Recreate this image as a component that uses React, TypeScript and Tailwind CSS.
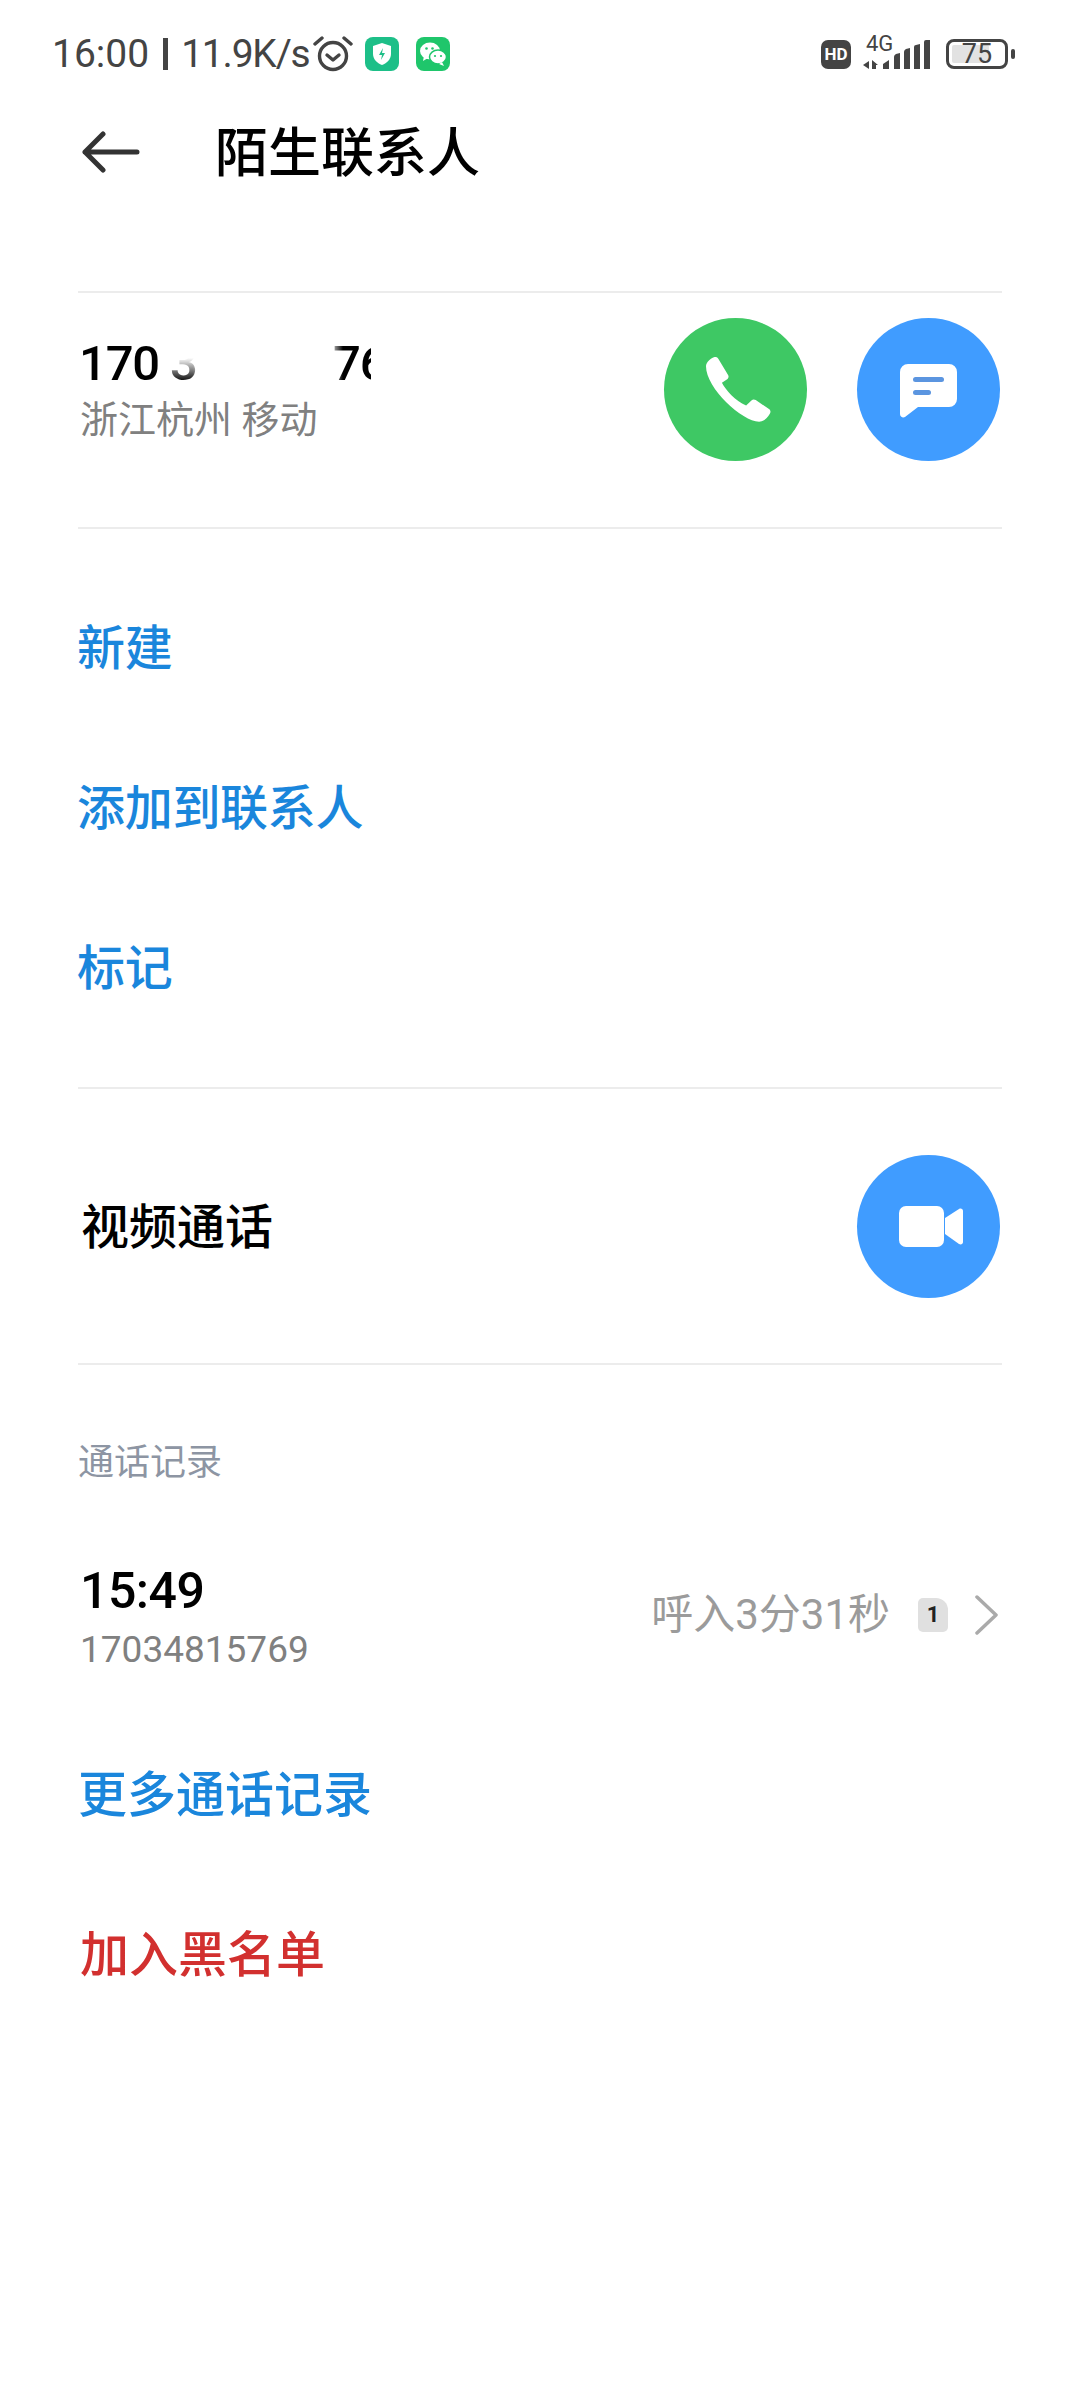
const cjk = "font-['Roboto','Noto_Sans_CJK_SC',sans-serif]";

const CircleButton = ({ color, children }: { color: string; children: React.ReactNode }) => (
  <div className={`w-[143px] h-[143px] rounded-full flex items-center justify-center ${color}`}>
    {children}
  </div>
);

const MenuRow = ({ label, className = "text-[48px] text-[#1a86dc] -ml-px tracking-[-0.3px]" }: { label: string; className?: string }) => (
  <div className={`h-[160px] flex items-center font-medium leading-none ${className}`}>{label}</div>
);

const Alarm = () => (
  <svg width="40" height="38" viewBox="0 0 40 38" fill="none" stroke="#444" strokeWidth="3.4" strokeLinecap="round" strokeLinejoin="round">
    <circle cx="20" cy="21" r="13.5" />
    <path d="M14 20l6 5 6-5" />
    <path d="M2 9l7-6M38 9l-7-6" />
  </svg>
);

const ShieldTile = () => (
  <div className="w-[34px] h-[34px] rounded-[8px] bg-[#1dbf88] flex items-center justify-center">
    <svg width="22" height="24" viewBox="0 0 22 24">
      <path d="M11 1l9 3v8c0 5-4 9-9 11-5-2-9-6-9-11V4z" fill="#fff" />
      <path d="M12 6l-4 7h3l-1 5 4-7h-3z" fill="#1dbf88" />
    </svg>
  </div>
);

const WechatTile = () => (
  <div className="w-[34px] h-[34px] rounded-[8px] bg-[#1fc66b] flex items-center justify-center">
    <svg width="28" height="26" viewBox="0 0 28 26">
      <ellipse cx="11" cy="10" rx="10" ry="8.5" fill="#fff" />
      <path d="M5 15l-1 5 5-3z" fill="#fff" />
      <ellipse cx="19" cy="16" rx="8.5" ry="7" fill="#fff" stroke="#1fc66b" strokeWidth="1.5" />
      <path d="M23 21l2 4-5-2z" fill="#fff" />
      <circle cx="7.5" cy="7.5" r="1.3" fill="#1fc66b" />
      <circle cx="13.5" cy="7.5" r="1.3" fill="#1fc66b" />
      <circle cx="16" cy="15" r="1.1" fill="#1fc66b" />
      <circle cx="22" cy="15" r="1.1" fill="#1fc66b" />
    </svg>
  </div>
);

const Signal = () => (
  <svg width="68" height="30" viewBox="0 0 68 30" fill="#444">
    <path d="M0 25l6-4v8zM9 20l6 5-2 0v4H9z" />
    <path d="M20 29v-5l6-4v9zM31 29V17q0-2 2-3l4-1v16zM41 29V12q0-2 2-3l4-1v21zM51 29V7q0-2 2-2l4-1v25zM61 29V2q0-2 2-2l4 0v29z" />
  </svg>
);

const Battery = () => (
  <div className="flex items-center gap-[3px]">
    <div className="relative w-[62px] h-[30px] rounded-[8px] border-[3px] border-[#444] flex items-center justify-center">
      <div className="absolute left-[3px] top-[3px] bottom-[3px] w-[37px] bg-[#e2e2e2] rounded-[2px]" />
      <span className="relative text-[27px] leading-none text-[#444]">75</span>
    </div>
    <div className="w-[4px] h-[10px] rounded-[2px] bg-[#444]" />
  </div>
);

const App = () => {
  return (
    <div className={`w-[1080px] h-[2400px] bg-white overflow-hidden ${cjk}`}>
      {/* status bar */}
      <div className="h-[108px] pl-[52px] pr-[65px] flex items-center text-[#444]">
        <span className="text-[39px] leading-none whitespace-nowrap">16:00</span>
        <div className="ml-[14px] w-[5px] h-[32px] bg-[#444]" />
        <span className="ml-[13px] text-[39px] leading-none whitespace-nowrap tracking-[-1.2px]">11.9K/s</span>
        <div className="ml-[4px]"><Alarm /></div>
        <div className="ml-[12px]"><ShieldTile /></div>
        <div className="ml-[17px]"><WechatTile /></div>
        <div className="ml-auto flex items-center">
          <div className="w-[30px] h-[29px] rounded-[7px] bg-[#444] text-white text-[17px] font-bold flex items-center justify-center leading-none">HD</div>
          <div className="relative ml-[12px] w-[68px] h-[32px]">
            <span className="absolute left-[3px] -top-[5px] text-[22px] leading-none">4G</span>
            <div className="absolute left-0 top-[2px]"><Signal /></div>
          </div>
          <div className="ml-[15px]"><Battery /></div>
        </div>
      </div>

      {/* header */}
      <div className="h-[88px] pl-[82px] flex items-center">
        <svg width="58" height="42" viewBox="0 0 58 42" fill="none" stroke="#333" strokeWidth="5" strokeLinecap="round" strokeLinejoin="round">
          <path d="M3 21h52M21 3L3 21l18 18" />
        </svg>
        <h1 className="ml-[75px] mt-[5px] text-[53px] font-medium text-black leading-none">陌生联系人</h1>
      </div>

      {/* number */}
      <div className="mt-[95px] mx-[78px] border-t-2 border-[#ececec] h-[236px] flex items-start justify-between pr-[2px]">
        <div className="pl-[1px] pt-[41px]">
          <div className="relative h-[60px] w-[300px] text-[49px] font-medium text-black leading-[60px] whitespace-nowrap tracking-[-1.2px]">
            170 3
            <span className="absolute left-[254px] top-0">76</span>
            <div className="absolute left-[92px] top-0 w-[32px] h-[60px] bg-gradient-to-t from-transparent from-20% to-white to-60%" />
            <div className="absolute left-[114px] top-0 w-[12px] h-[60px] bg-gradient-to-r from-transparent to-white" />
            <div className="absolute left-[250px] top-0 w-[14px] h-[60px] bg-gradient-to-r from-white to-transparent" />
            <div className="absolute left-[292px] top-0 w-[30px] h-[60px] bg-white" />
          </div>
          <div className="mt-[7px] ml-px text-[38px] text-[#808080] leading-none whitespace-pre">浙江杭州 移动</div>
        </div>
        <div className="flex gap-[50px] pt-[25px]">
          <CircleButton color="bg-[#3ec864]">
            <svg width="65" height="65" viewBox="0 0 196 196" fill="#fff" className="ml-[5px]">
              <path d="M0 28C0 15 15 3 26 0c6-1 10 3 12 7l29 48c2 5 1 8-2 11L48 78c12 22 40 55 73 68l16-15c4-4 9-4 13-1l40 27c5 4 6 10 2 15-7 12-17 23-32 23C110 195 0 95 0 28z" />
            </svg>
          </CircleButton>
          <CircleButton color="bg-[#409cff]">
            <svg width="57" height="54" viewBox="0 0 57 54" className="ml-[-1px] mt-[2px]">
              <path d="M8 0h41a8 8 0 0 1 8 8v27a8 8 0 0 1-8 8H18L5 53c-2 1-5 0-5-3V8a8 8 0 0 1 8-8z" fill="#fff" />
              <rect x="13" y="13" width="31" height="5" rx="2.5" fill="#5b95e0" />
              <rect x="13" y="26" width="18" height="5" rx="2.5" fill="#5b95e0" />
            </svg>
          </CircleButton>
        </div>
      </div>

      {/* actions */}
      <div className="mx-[78px] border-t-2 border-[#ececec] pt-[40px] pb-[38px]">
        <MenuRow label="新建" />
        <MenuRow label="添加到联系人" />
        <MenuRow label="标记" />
      </div>

      {/* video call */}
      <div className="mx-[78px] border-t-2 border-[#ececec] h-[276px] flex items-center justify-between pr-[2px]">
        <span className="pl-[3px] mt-[3px] text-[48px] font-medium text-black leading-none">视频通话</span>
        <CircleButton color="bg-[#409cff]">
          <svg width="64" height="41" viewBox="0 0 64 41" fill="#fff" className="ml-[5px]">
            <rect x="0" y="0" width="45" height="41" rx="7" />
            <path d="M46 12l14-9c2-1 4 0 4 2v31c0 2-2 3-4 2L46 28z" />
          </svg>
        </CircleButton>
      </div>

      {/* call log */}
      <div className="mx-[78px] border-t-2 border-[#ececec]">
        <div className="h-[196px] pt-[80px] text-[36px] text-[#8d95a3] leading-none">通话记录</div>
        <div className="h-[154px] flex items-start justify-between pl-[2px] pr-[4px]">
          <div>
            <div className="text-[50px] font-medium text-black leading-[60px] tracking-[-0.5px]">15:49</div>
            <div className="text-[37px] text-[#808080] leading-[44px] mt-[7px]">17034815769</div>
          </div>
          <div className="flex items-center mt-[33px]">
            <span className="text-[42px] text-[#9b9b9b] leading-none whitespace-nowrap">呼入3分31秒</span>
            <div className="ml-[28px] relative w-[30px] h-[34px] bg-[#e0e0e0] rounded-[5px] rounded-tr-[12px] flex items-center justify-center text-[22px] font-bold text-[#222] leading-none">1</div>
            <svg className="ml-[26px]" width="24" height="40" viewBox="0 0 24 40" fill="none" stroke="#aaa" strokeWidth="3.5" strokeLinecap="round" strokeLinejoin="round">
              <path d="M3 2l19 18L3 38" />
            </svg>
          </div>
        </div>
        <MenuRow label="更多通话记录" className="text-[49px] text-[#1a86dc]" />
        <MenuRow label="加入黑名单" className="text-[49px] text-[#d2302f] pl-[2px]" />
      </div>
    </div>
  );
};

export default App;
